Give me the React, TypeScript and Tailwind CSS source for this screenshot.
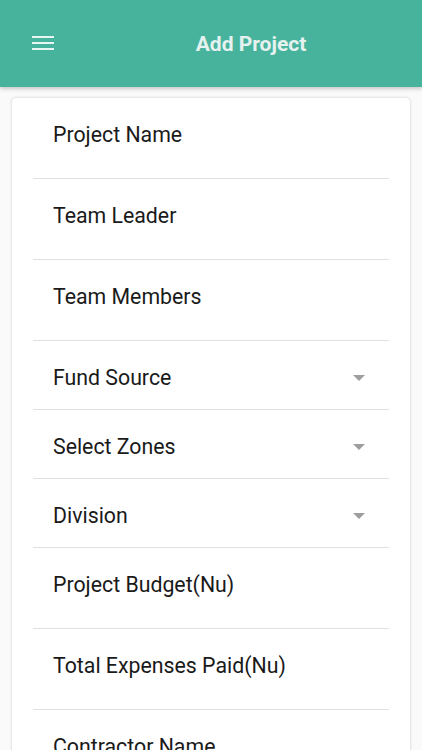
const font = { fontFamily: 'Roboto, "Liberation Sans", sans-serif' }

type Field = { label: string; picker?: boolean }

const fields: Field[] = [
  { label: 'Project Name' },
  { label: 'Team Leader' },
  { label: 'Team Members' },
  { label: 'Fund Source', picker: true },
  { label: 'Select Zones', picker: true },
  { label: 'Division', picker: true },
  { label: 'Project Budget(Nu)' },
  { label: 'Total Expenses Paid(Nu)' },
  { label: 'Contractor Name' },
]

function Caret() {
  return (
    <svg width="12" height="6" viewBox="0 0 12 6">
      <path d="M0 0 L12 0 L6 6 Z" fill="#9e9e9e" />
    </svg>
  )
}

function Row({ field }: { field: Field }) {
  if (field.picker) {
    return (
      <div className="mx-[21px] flex h-[69px] items-center justify-between border-b border-[#e0e0e0] pl-5 pr-6 pt-[5px]">
        <span className="text-[21.3px] text-[#1a1a1a]">{field.label}</span>
        <Caret />
      </div>
    )
  }
  return (
    <div className="mx-[21px] flex h-[81px] items-start border-b border-[#e0e0e0] pl-5 pt-[24px]">
      <span className="text-[21.3px] leading-[26px] text-[#1a1a1a]">{field.label}</span>
    </div>
  )
}

export default function App() {
  return (
    <div className="h-[750px] w-[422px] overflow-hidden bg-[#fafafa]" style={font}>
      <div className="relative flex h-[87px] items-center bg-[#48b39d] pt-[3px] shadow-[0_2px_4px_rgba(0,0,0,0.2)]">
        <div className="absolute left-[32px] top-[36px] flex w-[22px] flex-col gap-[4px]">
          <div className="h-[2px] bg-[#e8f6f3]" />
          <div className="h-[2px] bg-[#e8f6f3]" />
          <div className="h-[2px] bg-[#e8f6f3]" />
        </div>
        <h1 className="w-full pl-[80px] text-center text-[21px] font-bold text-[#e6f2ef]">Add Project</h1>
      </div>
      <div className="mx-[12px] mt-[11px] rounded-[4px] bg-white pb-4 shadow-[0_0_3px_rgba(0,0,0,0.2)]">
        {fields.map((f) => (
          <Row key={f.label} field={f} />
        ))}
      </div>
    </div>
  )
}
